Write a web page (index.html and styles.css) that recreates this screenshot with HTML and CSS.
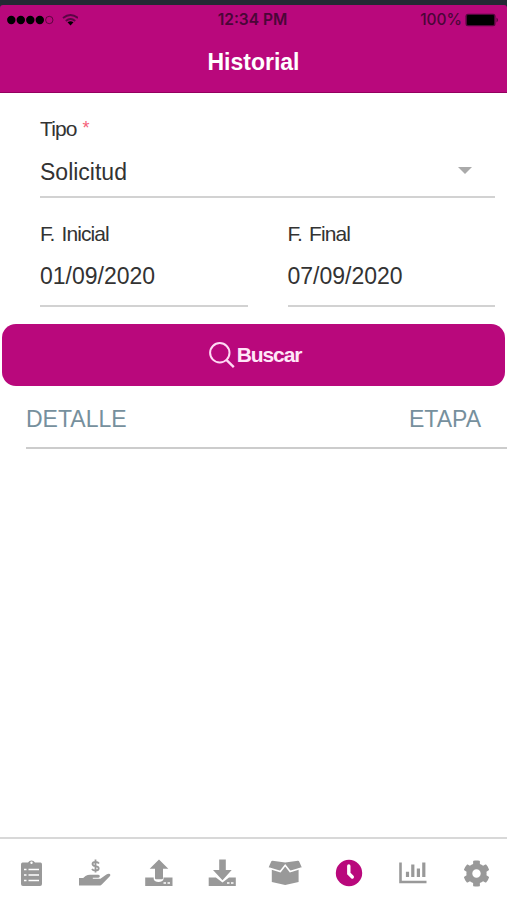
FILE: index.html
```html
<!DOCTYPE html>
<html lang="es">
<head>
    <meta charset="UTF-8">
    <meta name="viewport" content="width=device-width, initial-scale=1.0">
    <title>Historial</title>
    <link rel="stylesheet" href="styles.css">
</head>
<body>
    <div class="app">
        <header class="header">
            <div class="status">
                <div class="signal">
                    <svg width="72" height="16" viewBox="0 0 72 16">
                        <circle cx="5.3" cy="8" r="4.2"/>
                        <circle cx="14.8" cy="8" r="4.2"/>
                        <circle cx="24.3" cy="8" r="4.2"/>
                        <circle cx="33.8" cy="8" r="4.2"/>
                        <circle cx="43.3" cy="8" r="3.7" fill="none" stroke="#000" stroke-opacity=".6" stroke-width=".8"/>
                        <g fill="none" stroke="#5b0645" stroke-width="2">
                            <path d="M57 6q7.500-6 15 0"/>
                            <path d="M59.800 9q4.700-4 9.400 0"/>
                        </g>
                        <path d="M64.500 13.500l-3-3.200q3-2 6 0z"/>
                    </svg>
                </div>
                <div class="time">12:34 PM</div>
                <div class="battery">
                    <span>100%</span>
                    <svg width="34" height="14" viewBox="0 0 34 14">
                        <rect x=".5" y=".7" width="30" height="12.6" rx="2.5" fill="#52063c"/>
                        <rect x="2" y="2" width="27" height="10" rx="1"/>
                        <path d="M31.500 4.500q3 2.500 0 5z" fill="#52063c"/>
                    </svg>
                </div>
            </div>
            <h1>Historial</h1>
        </header>

        <main class="content">
            <form class="filters">
                <div class="field">
                    <label>Tipo <span class="required">*</span></label>
                    <div class="value select">Solicitud</div>
                </div>
                <div class="dates">
                    <div class="field">
                        <label>F. Inicial</label>
                        <div class="value">01/09/2020</div>
                    </div>
                    <div class="field">
                        <label>F. Final</label>
                        <div class="value">07/09/2020</div>
                    </div>
                </div>
            </form>

            <button class="search" type="button">
                <svg width="26" height="28" viewBox="0 0 26 28" fill="none" stroke="#ffd9f4" stroke-width="2">
                    <circle cx="10.8" cy="11.8" r="9.7"/>
                    <path d="M17.4 18.9l7.4 7.3" stroke-width="2.4"/>
                </svg>
                <span>Buscar</span>
            </button>

            <div class="list-head">
                <span>DETALLE</span>
                <span>ETAPA</span>
            </div>
        </main>

        <nav class="tabs">
            <!-- solicitudes -->
            <a class="tab"><svg width="34" height="30" viewBox="0 0 34 30">
                <path d="M7.500 4.500H13a4 4 0 0 1 7 0h5.500q1.500 0 1.500 2V26q0 2-2 2H8q-2 0-2-2V6.500q0-2 1.500-2z"/>
                <path d="M9 11.500h2.500M13.500 11.500H24M9 17h2.500M13.500 17H24M9 22.500h2.500M13.500 22.500H24" stroke="#fff" stroke-width="1.600"/>
                <circle cx="16.500" cy="4.800" r="1.200" fill="#fff"/>
            </svg></a>
            <!-- pagos -->
            <a class="tab"><svg width="34" height="30" viewBox="0 0 34 30">
                <path d="M21 5.500q-1-1.500-3.500-1.500-3 0-3 2 0 1.700 3 2.200 3.200.5 3.200 2.300 0 2-3.200 2-2.500 0-3.500-1.600M17.500 1.500v13" fill="none" stroke="#999" stroke-width="1.800"/>
                <path d="M1 20h4.200l2.300-1.900q2.200-1.400 4.500-1.400h8.300q1.700.2 1.500 1.800-.3 1.200-1.800 1.200h-5.200v1h7.600l6-4.200q2.200-1.300 3.600-.4 1 1-.4 2.500l-7.800 7.800q-1.300 1.200-3 1.200H1z"/>
            </svg></a>
            <!-- subir -->
            <a class="tab"><svg width="34" height="30" viewBox="0 0 34 30">
                <path d="M4.200 19.500h8.500v1.800q1 2.700 4.800 2.700 4 0 5-2.700v-1.800h9V28H4.200z"/>
                <path d="M18 1.500l9.300 9.300h-5.300v9.500q0 1-1 1h-6q-1 0-1-1v-9.500H8.700z"/>
                <path d="M22.500 25h2.500M26.500 25h2.500" stroke="#fff" stroke-width="1.600"/>
            </svg></a>
            <!-- descargar -->
            <a class="tab"><svg width="34" height="30" viewBox="0 0 34 30">
                <path d="M3.700 19.500h7.200l6.600 5 6.500-5h6.800V28H3.700z"/>
                <path d="M14.200 1.500h6.600v10.500h5.900l-9.200 10.200L8 12h6.200z"/>
                <path d="M22 25h2.500M26 25h2.500" stroke="#fff" stroke-width="1.600"/>
            </svg></a>
            <!-- productos -->
            <a class="tab"><svg width="34" height="30" viewBox="0 0 34 30">
                <path d="M4.500 2.800l12.700 1.700 12.700-1.700q1.200 0 1.500 1.200l2.300 5.200-3.100 1.300v13.500l-13.400 3-13.400-3V10.500L.7 9.200 3 4q.3-1.200 1.500-1.200z"/>
                <path d="M1.500 10.300l10.800 3.200 4.900-6.300 4.900 6.300 10.800-3.200" fill="none" stroke="#fff" stroke-width="1.600"/>
            </svg></a>
            <!-- historial -->
            <a class="tab active"><svg width="34" height="30" viewBox="0 0 34 30">
                <circle cx="17" cy="15" r="13.200"/>
                <path d="M16.800 8v7.500l3.500 3.500" fill="none" stroke="#fff" stroke-width="3.400" stroke-linecap="round"/>
            </svg></a>
            <!-- reportes -->
            <a class="tab"><svg width="34" height="30" viewBox="0 0 34 30">
                <path d="M5.500 4.500v19.500H31.500" fill="none" stroke="#999" stroke-width="2.600"/>
                <path d="M12.500 13.800v5.200M17.800 6.500v12.500M23.400 10.500v8.500M28.800 4.500v14.500" stroke="#999" stroke-width="3.200"/>
            </svg></a>
            <!-- ajustes -->
            <a class="tab gear"><svg width="27" height="27" viewBox="0 0 512 512">
                <path d="M487.400 315.700l-42.600-24.600c4.300-23.200 4.300-47 0-70.200l42.600-24.600c4.900-2.800 7.100-8.600 5.500-14-11.100-35.600-30-67.800-54.700-94.600-3.800-4.100-10-5.100-14.800-2.300L380.800 110c-17.900-15.400-38.500-27.300-60.800-35.100V25.800c0-5.600-3.900-10.500-9.400-11.700-36.700-8.200-74.300-7.800-109.200 0-5.500 1.200-9.400 6.100-9.400 11.700V75c-22.200 7.900-42.800 19.800-60.800 35.100L88.700 85.500c-4.900-2.800-11-1.900-14.800 2.300-24.700 26.700-43.600 58.900-54.700 94.600-1.700 5.400.6 11.200 5.500 14L67.300 221c-4.300 23.200-4.300 47 0 70.200l-42.600 24.600c-4.900 2.800-7.100 8.600-5.500 14 11.100 35.600 30 67.800 54.700 94.600 3.800 4.100 10 5.100 14.800 2.300l42.600-24.600c17.900 15.400 38.500 27.300 60.800 35.100v49.200c0 5.600 3.900 10.500 9.400 11.700 36.700 8.200 74.300 7.800 109.200 0 5.500-1.200 9.400-6.100 9.400-11.700v-49.200c22.200-7.900 42.800-19.800 60.800-35.100l42.600 24.600c4.900 2.800 11 1.900 14.800-2.300 24.700-26.700 43.600-58.900 54.700-94.600 1.500-5.500-.7-11.300-5.600-14.100zM256 336c-44.100 0-80-35.900-80-80s35.900-80 80-80 80 35.900 80 80-35.900 80-80 80z"/>
            </svg></a>
        </nav>
    </div>
</body>
</html>
```
FILE: styles.css
```css
* {
    box-sizing: border-box;
}
body {
    margin: 0;
    background-color: #242934;
    font-family: "Liberation Sans", Arial, sans-serif;
    font-size: 23px;
    color: #333;
}
svg {
    display: block;
}
.app {
    display: flex;
    flex-direction: column;
    height: 100vh;
    padding-top: 5px;
}

/* Cabecera */
.header {
    height: 88px;
    background-color: #b9087c;
    border-bottom: 1px solid #94005f;
    border-radius: 3px 3px 0 0;
}
.status {
    display: grid;
    grid-template-columns: 1fr auto 1fr;
    align-items: center;
    height: 29px;
    padding: 0 8px 0 6px;
    font-family: Inter, "Liberation Sans", sans-serif;
    font-size: 15.5px;
    color: #4a0637;
}
.time {
    font-weight: 600;
}
.battery {
    display: flex;
    justify-content: flex-end;
    align-items: center;
    gap: 3px;
    font-weight: 500;
}
h1 {
    margin: 0;
    font-size: 23px;
    line-height: 56px;
    text-align: center;
    color: #fff;
}

/* Filtros */
.content {
    flex: 1;
    background-color: #fff;
}
.filters {
    padding: 23px 12px 17px 40px;
}
.field {
    flex: 1;
    border-bottom: 2px solid #d2d2d2;
}
label {
    display: block;
    font-size: 21px;
    line-height: 26px;
    letter-spacing: -0.9px;
    word-spacing: 2px;
}
.required {
    font-size: 18px;
    line-height: 1;
    vertical-align: 2px;
    margin-left: -1px;
    color: #f5617a;
}
.value {
    height: 58px;
    padding-top: 16px;
    line-height: 26px;
}
.select {
    display: flex;
    justify-content: space-between;
    height: 54px;
    padding-top: 17px;
    padding-right: 23px;
}
.select::after {
    content: "";
    height: 0;
    margin-top: 8px;
    border: 7px solid transparent;
    border-top-color: #aaa;
    border-bottom: 0;
}
.dates {
    display: flex;
    gap: 40px;
    padding-top: 23px;
}

/* Boton buscar */
.search {
    display: flex;
    justify-content: center;
    align-items: center;
    gap: 2px;
    width: calc(100% - 4px);
    height: 62px;
    padding-left: 9px;
    border: 0;
    border-radius: 14px;
    background-color: #b9087c;
    margin: 0 2px;
    font-family: inherit;
    font-size: 21px;
    font-weight: bold;
    letter-spacing: -1.1px;
    color: #ffe6f8;
}

/* Listado */
.list-head {
    display: flex;
    justify-content: space-between;
    height: 63px;
    padding: 19px 26px 0 0;
    margin-left: 26px;
    border-bottom: 2px solid #ccc;
    line-height: 28px;
    color: #76909d;
}

/* Menu inferior */
.tabs {
    display: grid;
    grid-template-columns: repeat(8, 1fr);
    height: 63px;
    background-color: #fff;
    border-top: 2px solid #d8d8d8;
}
.tab {
    display: flex;
    justify-content: center;
    align-items: center;
    padding-top: 7px;
    fill: #999;
}
.tab.active {
    fill: #b9087c;
}
.gear {
    padding-left: 3px;
}
```
